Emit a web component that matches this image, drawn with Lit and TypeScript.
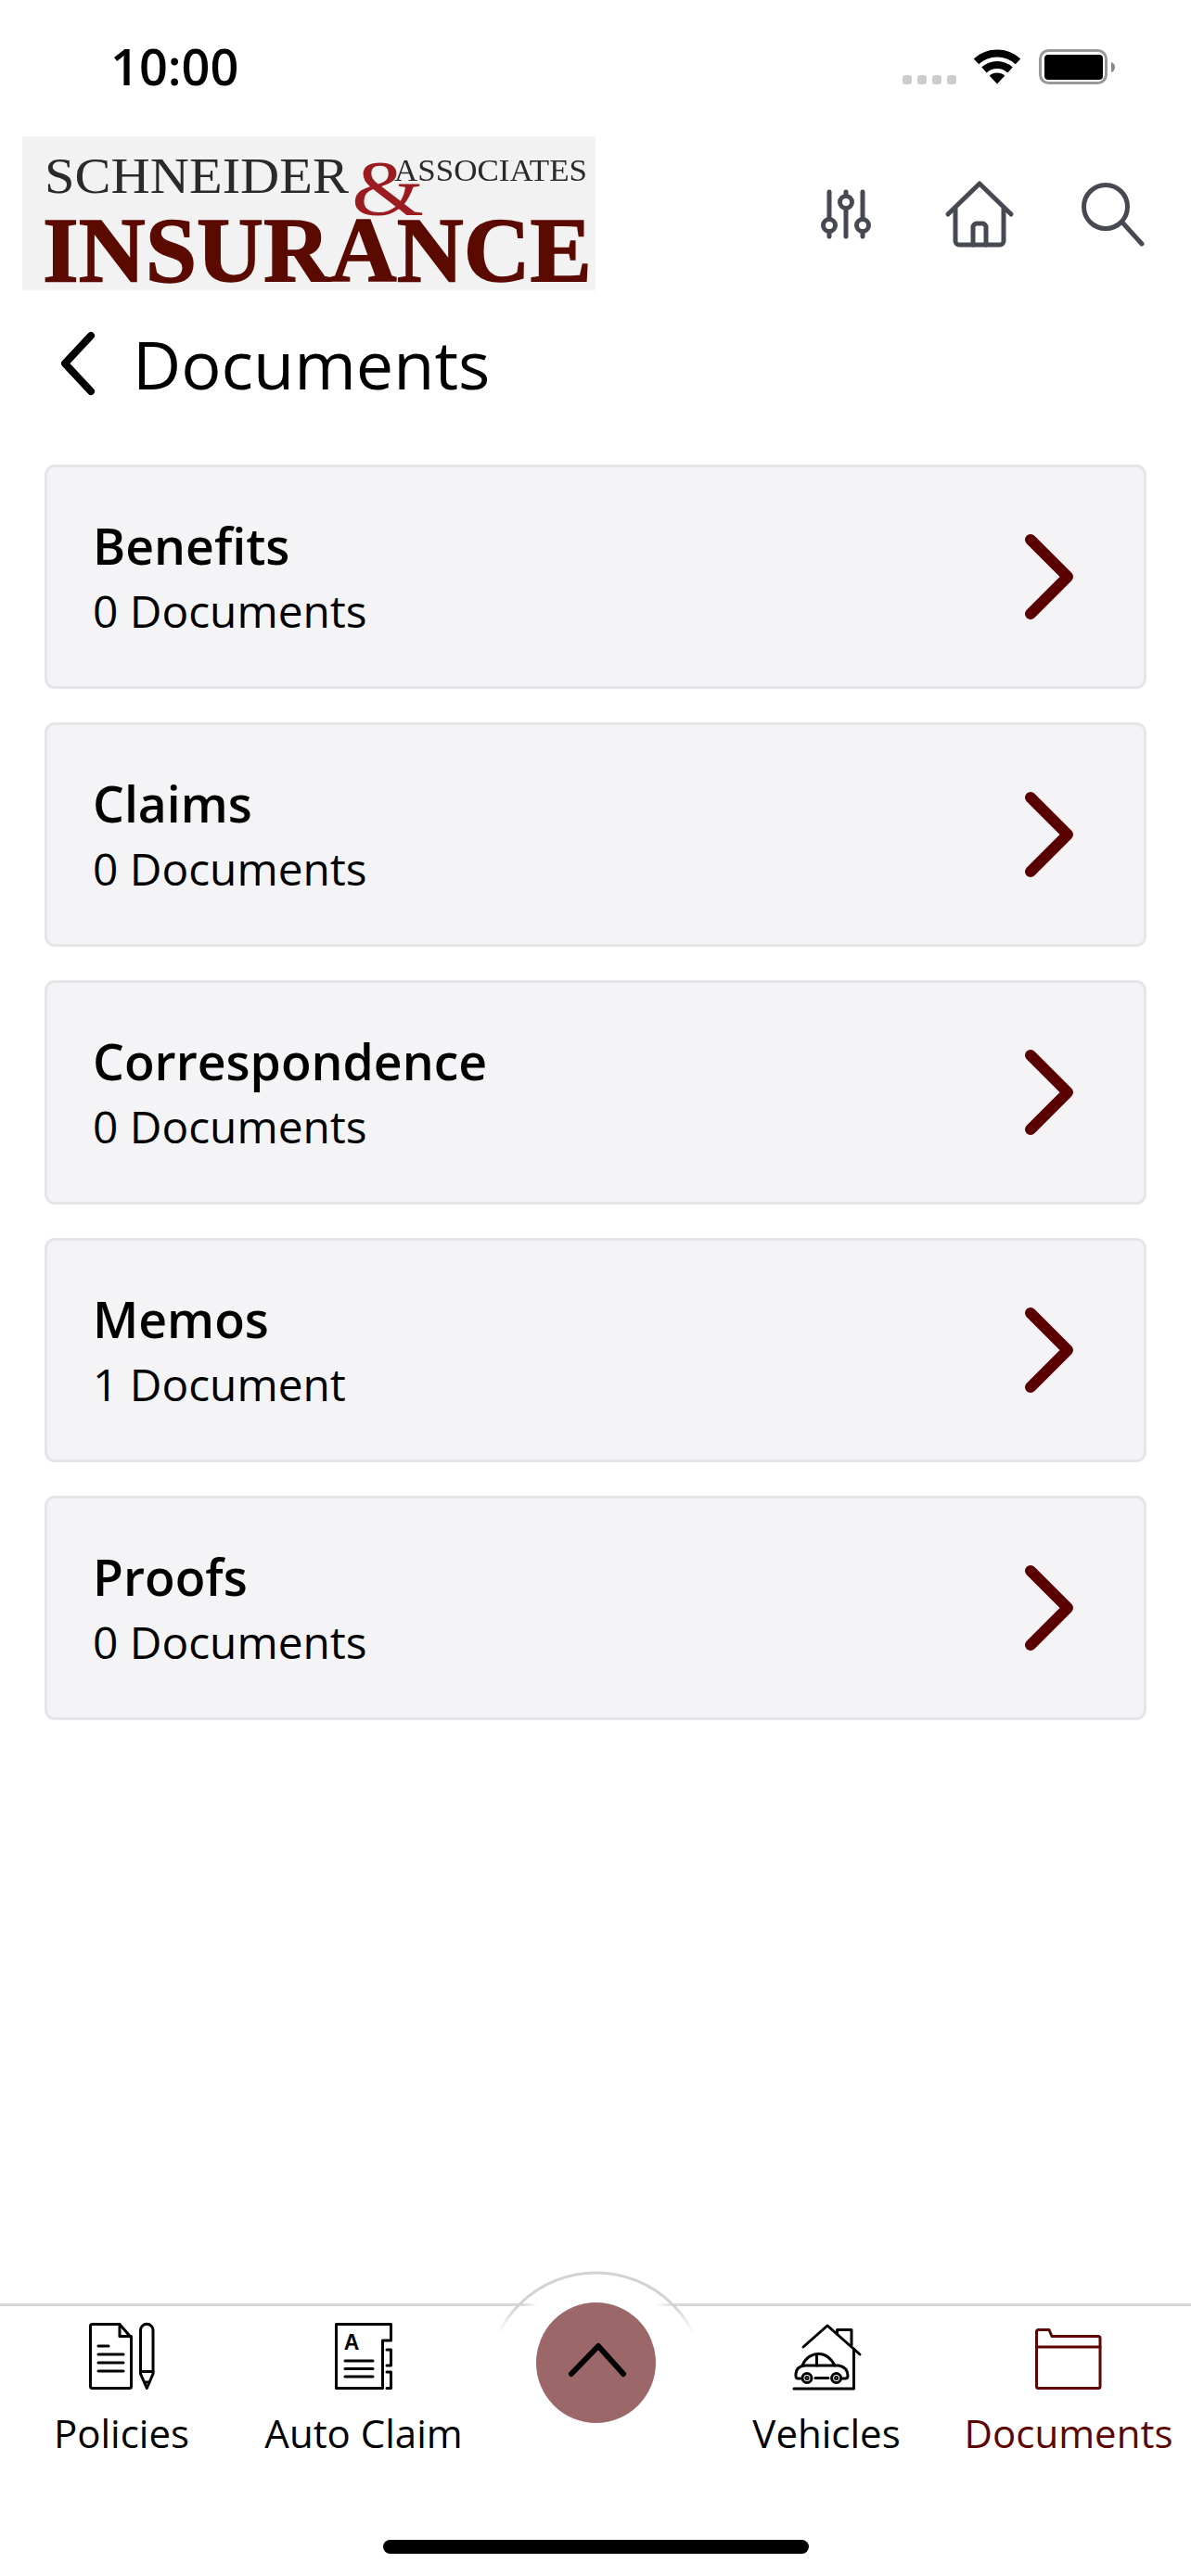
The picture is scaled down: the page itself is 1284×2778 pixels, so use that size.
import { LitElement, css, html, svg } from 'lit';
import { customElement, property } from 'lit/decorators.js';

const icons = {
  policies: svg`
    <path d="M13.5 4.5H43L55.5 19V71.5a2 2 0 0 1-2 2H13.5a2 2 0 0 1-2-2V6.5a2 2 0 0 1 2-2z" />
    <path d="M43 4.5V17.5H55.5" />
    <path d="M20 28H31M20 37H47M20 46H47M20 55H47" />
    <path d="M65.5 55V11a6.7 6.7 0 0 1 13.5 0V55V58L72.3 73.5L65.5 58z" />
    <path d="M65.5 55.5H79M70 67H74.5" />`,
  claim: svg`
    <path d="M15.5 4.5H74.5V22H65.5V73.5H15.5z" />
    <path d="M70 32H74.5V49H70M70 56H74.5V73.5H70" />
    <path d="M25 44H55M25 52.5H55M25 61H55" />
    <text class="icon-letter" x="32" y="32" text-anchor="middle">A</text>`,
  vehicles: svg`
    <path d="M20 29L46 6L81 37" />
    <path d="M56.5 15V10.5H72V27" />
    <path d="M74.5 31V74H10" />
    <path d="M17 63H14Q11.5 63 12 58Q12.5 50 22 49H58Q68 51 68 60Q68 63 65 63H62" />
    <path d="M19 49Q24 37 36 36.5Q47 36 54 49M34.5 37V49M33 62.5H47" />
    <circle cx="24" cy="62.5" r="5" />
    <circle cx="55.6" cy="62.5" r="5" />
    <circle cx="24" cy="62.5" r="1" />
    <circle cx="55.6" cy="62.5" r="1" />`,
  documents: svg`
    <path d="M10.5 28V12.5a2 2 0 0 1 2-2H24l3 7H77a2 2 0 0 1 2 2V71.5a2 2 0 0 1-2 2H12.5a2 2 0 0 1-2-2z" />
    <path d="M10.5 29H79" />`,
};

type TabIcon = keyof typeof icons;

const tabs: { label: string; icon?: TabIcon; active?: boolean }[] = [
  { label: 'Policies', icon: 'policies' },
  { label: 'Auto Claim', icon: 'claim' },
  { label: '' },
  { label: 'Vehicles', icon: 'vehicles' },
  { label: 'Documents', icon: 'documents', active: true },
];

const folders = [
  { name: 'Benefits', count: '0 Documents' },
  { name: 'Claims', count: '0 Documents' },
  { name: 'Correspondence', count: '0 Documents' },
  { name: 'Memos', count: '1 Document' },
  { name: 'Proofs', count: '0 Documents' },
];

@customElement('folder-card')
export class FolderCard extends LitElement {
  static override styles = css`
    :host {
      display: block;
    }

    .card {
      box-sizing: border-box;
      display: flex;
      align-items: center;
      justify-content: space-between;
      height: 242px;
      padding: 0 70px 0 49px;
      background: #f4f4f6;
      border: 3px solid #e5e5ea;
      border-radius: 11px;
    }

    .text {
      padding-top: 6px;
    }

    .name {
      font-size: 53.5px;
      font-weight: 600;
      line-height: 68px;
      color: #000;
    }

    .count {
      font-size: 47.8px;
      line-height: 72px;
      color: #000;
    }

    svg {
      display: block;
      fill: none;
      stroke: #5a0000;
      stroke-width: 12;
      stroke-linecap: round;
      stroke-linejoin: round;
    }
  `;

  @property({ type: String })
  name = '';

  @property({ type: String })
  count = '';

  override render() {
    return html`
      <div class="card">
        <div class="text">
          <div class="name">${this.name}</div>
          <div class="count">${this.count}</div>
        </div>
        <svg width="64" height="104" viewBox="0 0 64 104">
          <path d="M12 12L52 52L12 92" />
        </svg>
      </div>
    `;
  }
}

@customElement('app-root')
export class AppRoot extends LitElement {
  static override styles = css`
    :host {
      display: block;
      font-family: 'Open Sans', 'Noto Sans', sans-serif;
      background: #fff;
    }

    .page {
      display: flex;
      flex-direction: column;
      min-height: 2778px;
    }

    .status {
      box-sizing: border-box;
      display: flex;
      height: 147px;
      padding: 36px 82px 0 119px;
    }

    .time {
      font-size: 54px;
      font-weight: 600;
      line-height: 70px;
      color: #000;
    }

    .status-icons {
      display: flex;
      align-items: flex-end;
      height: 38px;
      margin: 17px 0 0 auto;
    }

    .dots {
      display: flex;
      gap: 6px;
      margin-right: 19px;
    }

    .dots span {
      width: 10px;
      height: 10px;
      border-radius: 3px;
      background: #ccc;
    }

    .wifi {
      margin-right: 20px;
    }

    .header {
      display: flex;
      align-items: center;
      justify-content: space-between;
      padding: 0 44px 0 24px;
    }

    .logo {
      display: block;
      overflow: visible;
      background: #f2f2f2;
    }

    .logo text {
      font-family: 'Liberation Serif', serif;
      filter: blur(0.5px);
    }

    .actions {
      display: flex;
      gap: 64px;
    }

    .actions svg {
      display: block;
      fill: none;
      stroke: #464852;
      stroke-width: 5;
      stroke-linecap: round;
      stroke-linejoin: round;
    }

    .title-row {
      display: flex;
      align-items: center;
      gap: 37px;
      margin-top: 30px;
      padding-left: 62px;
    }

    .title-row svg {
      display: block;
      fill: none;
      stroke: #000;
      stroke-width: 8;
      stroke-linecap: round;
      stroke-linejoin: round;
    }

    h1 {
      margin: 0;
      font-size: 72px;
      font-weight: 400;
      line-height: 98px;
      color: #000;
    }

    .list {
      flex: 1;
      display: flex;
      flex-direction: column;
      gap: 36px;
      padding: 60px 48px 0;
    }

    .tabbar {
      position: relative;
      border-top: 3px solid #d8d8d8;
      padding-top: 15px;
    }

    .tabs {
      display: grid;
      grid-template-columns: 262px 260px 240px 258px 264px;
    }

    .tab {
      display: flex;
      flex-direction: column;
      align-items: center;
      color: #000;
    }

    .tab.active {
      color: #5d0505;
    }

    .tab svg {
      display: block;
      fill: none;
      stroke: currentColor;
      stroke-width: 3;
      stroke-linecap: round;
      stroke-linejoin: round;
    }

    .tab .icon-letter {
      font-family: 'Liberation Sans', sans-serif;
      font-size: 23px;
      font-weight: 700;
      fill: currentColor;
      stroke: none;
    }

    .tab-label {
      margin-top: 15px;
      font-size: 42px;
      line-height: 57px;
      white-space: nowrap;
    }

    .dome {
      position: absolute;
      left: 530px;
      top: -43px;
    }

    .fab {
      position: absolute;
      left: 578px;
      top: -4px;
      display: flex;
      align-items: center;
      justify-content: center;
      width: 129px;
      height: 130px;
      border-radius: 50%;
      background: #9c6769;
    }

    .fab svg {
      display: block;
      margin: -6px 0 0 3px;
      fill: none;
      stroke: #000;
      stroke-width: 6;
      stroke-linecap: round;
      stroke-linejoin: round;
    }

    .home-indicator {
      width: 459px;
      height: 15px;
      margin: 87px auto 0;
      border-radius: 8px;
      background: #000;
    }

    .home-space {
      height: 24px;
    }
  `;

  private renderLogo() {
    return html`
      <svg class="logo" width="618" height="166" viewBox="0 0 618 166">
        <text x="24" y="61" font-size="55" fill="#2a2a2a" textLength="328" lengthAdjust="spacingAndGlyphs">SCHNEIDER</text>
        <text x="401" y="48" font-size="34" fill="#2a2a2a" textLength="208" lengthAdjust="spacingAndGlyphs">ASSOCIATES</text>
        <text x="355" y="85" font-size="84" fill="#9b1c20" textLength="78" lengthAdjust="spacingAndGlyphs">&amp;</text>
        <text x="22" y="156" font-size="100" font-weight="700" fill="#5b0a00" stroke="#5b0a00" stroke-width="1.5" textLength="592" lengthAdjust="spacingAndGlyphs">INSURANCE</text>
      </svg>
    `;
  }

  private renderStatus() {
    return html`
      <div class="status">
        <div class="time">10:00</div>
        <div class="status-icons">
          <div class="dots"><span></span><span></span><span></span><span></span></div>
          <svg class="wifi" width="50" height="38" viewBox="0 0 50 38">
            <path d="M2.5 13.4A33 33 0 0 1 47.5 13.4" fill="none" stroke="#000" stroke-width="8" />
            <path d="M11 22.5A20.5 20.5 0 0 1 39 22.5" fill="none" stroke="#000" stroke-width="8" />
            <path d="M25 37.5L16.8 28.7A12 12 0 0 1 33.2 28.7z" fill="#000" />
          </svg>
          <svg width="82" height="38" viewBox="0 0 82 38">
            <rect x="1.5" y="1.5" width="71" height="35" rx="9" fill="none" stroke="#999" stroke-width="3" />
            <rect x="6" y="6" width="63" height="27" rx="4" fill="#000" />
            <path d="M78 14a6 6 0 0 1 4 5.500a6 6 0 0 1-4 5.500z" fill="#888" />
          </svg>
        </div>
      </div>
    `;
  }

  private renderHeader() {
    return html`
      <div class="header">
        ${this.renderLogo()}
        <div class="actions">
          <svg width="80" height="80" viewBox="0 0 80 80">
            <path d="M22 17V65M40 17V65M58 17V65" />
            <circle cx="22" cy="53" r="6.500" fill="#fff" />
            <circle cx="40" cy="28" r="6.500" fill="#fff" />
            <circle cx="58" cy="53" r="6.500" fill="#fff" />
          </svg>
          <svg width="80" height="80" viewBox="0 0 80 80">
            <path d="M6 41L40 8L74 41" />
            <path d="M14 34V70a4 4 0 0 0 4 4H62a4 4 0 0 0 4-4V34" />
            <path d="M33 74V55a4 4 0 0 1 4-4H43a4 4 0 0 1 4 4V74" />
          </svg>
          <svg width="80" height="80" viewBox="0 0 80 80">
            <circle cx="32" cy="33" r="23.500" />
            <path d="M51 51L71 73" />
          </svg>
        </div>
      </div>
    `;
  }

  private renderTabBar() {
    return html`
      <div class="tabbar">
        <svg class="dome" width="230" height="80" viewBox="0 0 230 80">
          <defs>
            <linearGradient id="domeFade" gradientUnits="userSpaceOnUse" x1="0" y1="44" x2="0" y2="72">
              <stop offset="0" stop-color="#d2d2d2" />
              <stop offset="1" stop-color="#ffffff" />
            </linearGradient>
            <linearGradient id="gapFade">
              <stop offset="0" stop-color="#fff" stop-opacity="0" />
              <stop offset="0.1" stop-color="#fff" />
              <stop offset="0.87" stop-color="#fff" />
              <stop offset="1" stop-color="#fff" stop-opacity="0" />
            </linearGradient>
          </defs>
          <rect x="33" y="39" width="165" height="8" fill="url(#gapFade)" />
          <circle cx="112.500" cy="124" r="117" fill="none" stroke="url(#domeFade)" stroke-width="3" />
        </svg>
        <div class="fab">
          <svg width="64" height="40" viewBox="0 0 64 40">
            <path d="M4 35L33 5L60 35" />
          </svg>
        </div>
        <div class="tabs">
          ${tabs.map(
            (tab) => html`
              <div class="tab ${tab.active ? 'active' : ''}">
                ${tab.icon
                  ? html`
                      <svg width="90" height="78" viewBox="0 0 90 78">${icons[tab.icon]}</svg>
                      <div class="tab-label">${tab.label}</div>
                    `
                  : ''}
              </div>
            `
          )}
        </div>
        <div class="home-indicator"></div>
        <div class="home-space"></div>
      </div>
    `;
  }

  override render() {
    return html`
      <div class="page">
        ${this.renderStatus()}
        ${this.renderHeader()}
        <div class="title-row">
          <svg width="44" height="72" viewBox="0 0 44 72">
            <path d="M36 6L8 36L36 66" />
          </svg>
          <h1>Documents</h1>
        </div>
        <div class="list">
          ${folders.map(
            (folder) => html`<folder-card .name=${folder.name} .count=${folder.count}></folder-card>`
          )}
        </div>
        ${this.renderTabBar()}
      </div>
    `;
  }
}
